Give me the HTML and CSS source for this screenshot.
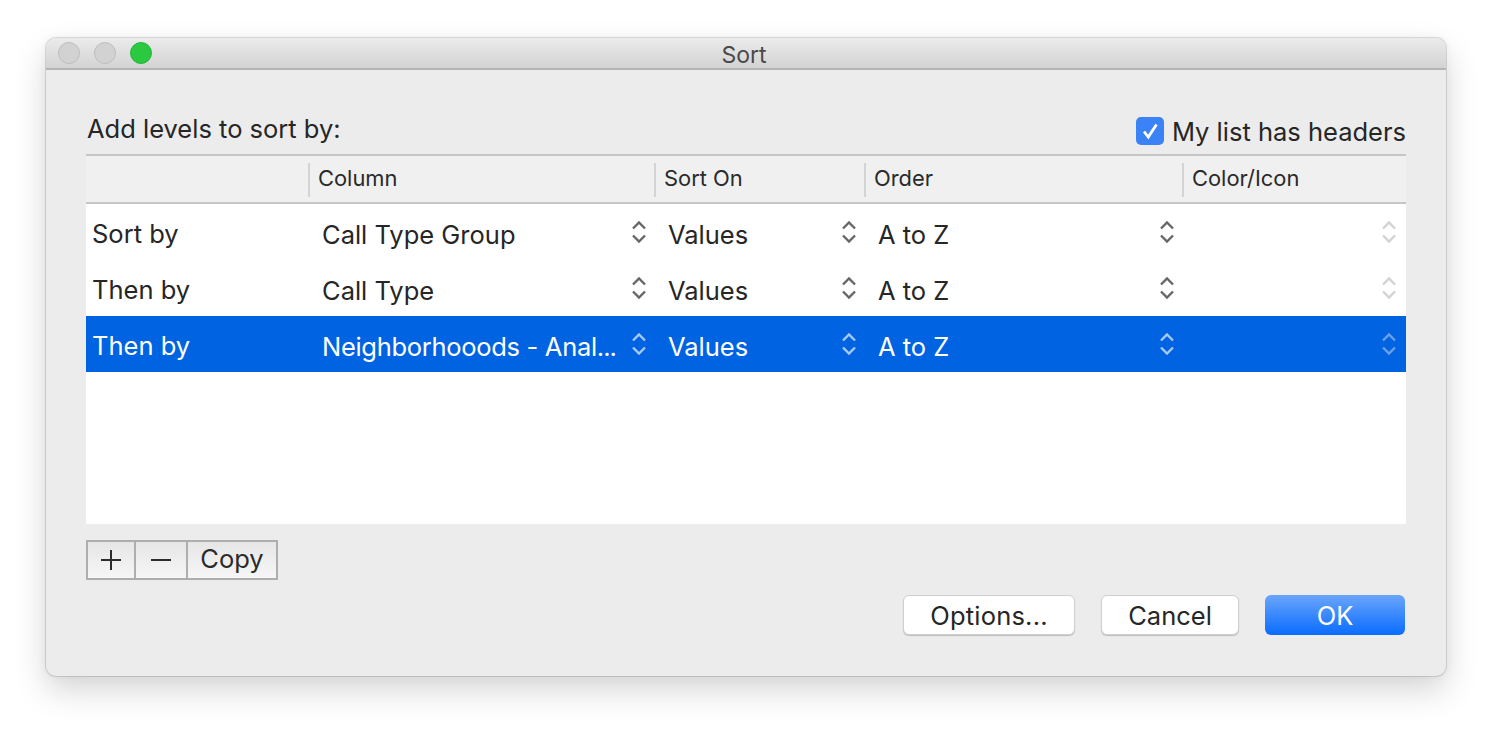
FILE: index.html
```html
<!DOCTYPE html>
<html lang="en">
<head>
<meta charset="utf-8">
<title>Sort</title>
<link rel="stylesheet" href="styles.css">
</head>
<body>
<svg class="defs" width="0" height="0" aria-hidden="true">
  <symbol id="updown" viewBox="0 0 16 26">
    <path d="M2 9.5 8 3.5 14 9.5M2 16.500 8 22.500 14 16.500" fill="none" stroke="currentColor" stroke-width="2.400"/>
  </symbol>
</svg>
<main class="window">
  <header class="titlebar">
    <div class="lights">
      <span class="light"></span>
      <span class="light"></span>
      <span class="light light-green"></span>
    </div>
    <div class="title">Sort</div>
  </header>
  <section class="content">
    <div class="top">
      <div class="prompt">Add levels to sort by:</div>
      <label class="headers-check">
        <span class="checkbox">
          <svg width="28" height="28" viewBox="0 0 28 28"><path d="M8 14.500 12.300 20 20.500 7.500" fill="none" stroke="#fff" stroke-width="2.800"/></svg>
        </span>
        <span>My list has headers</span>
      </label>
    </div>
    <div class="table">
      <div class="thead">
        <div class="th"></div>
        <div class="th th-sep">Column</div>
        <div class="th th-sep">Sort On</div>
        <div class="th th-sep">Order</div>
        <div class="th th-sep">Color/Icon</div>
      </div>
      <div class="tbody">
        <div class="row">
          <div class="cell label">Sort by</div>
          <div class="cell pick"><span class="val">Call Type Group</span><svg class="ud"><use href="#updown"/></svg></div>
          <div class="cell pick"><span class="val">Values</span><svg class="ud"><use href="#updown"/></svg></div>
          <div class="cell pick"><span class="val">A to Z</span><svg class="ud"><use href="#updown"/></svg></div>
          <div class="cell pick last"><span class="val"></span><svg class="ud off"><use href="#updown"/></svg></div>
        </div>
        <div class="row">
          <div class="cell label">Then by</div>
          <div class="cell pick"><span class="val">Call Type</span><svg class="ud"><use href="#updown"/></svg></div>
          <div class="cell pick"><span class="val">Values</span><svg class="ud"><use href="#updown"/></svg></div>
          <div class="cell pick"><span class="val">A to Z</span><svg class="ud"><use href="#updown"/></svg></div>
          <div class="cell pick last"><span class="val"></span><svg class="ud off"><use href="#updown"/></svg></div>
        </div>
        <div class="row selected">
          <div class="cell label">Then by</div>
          <div class="cell pick"><span class="val val-tight">Neighborhooods - Anal<span class="dots">...</span></span><svg class="ud"><use href="#updown"/></svg></div>
          <div class="cell pick"><span class="val">Values</span><svg class="ud"><use href="#updown"/></svg></div>
          <div class="cell pick"><span class="val">A to Z</span><svg class="ud"><use href="#updown"/></svg></div>
          <div class="cell pick last"><span class="val"></span><svg class="ud off"><use href="#updown"/></svg></div>
        </div>
      </div>
    </div>
    <div class="segments">
      <button class="seg seg-plus" type="button"><svg width="24" height="24" viewBox="0 0 24 24"><path d="M12 2V22M2 12H22" stroke="#2b2b2b" stroke-width="2"/></svg></button>
      <button class="seg seg-minus" type="button"><svg width="24" height="24" viewBox="0 0 24 24"><path d="M2 12H22" stroke="#2b2b2b" stroke-width="2"/></svg></button>
      <button class="seg seg-copy" type="button">Copy</button>
    </div>
    <div class="actions">
      <button class="btn btn-options" type="button">Options...</button>
      <button class="btn btn-cancel" type="button">Cancel</button>
      <button class="btn btn-ok" type="button">OK</button>
    </div>
  </section>
</main>
</body>
</html>
```
FILE: styles.css
```css
* { box-sizing: border-box; }
html, body { margin: 0; height: 100%; background: #fff; overflow: hidden; }
body {
  padding: 38px 46px 0;
  font-family: Inter, "Liberation Sans", sans-serif;
  color: #262626;
}
.defs { display: block; height: 0; }
.window {
  width: 1400px;
  height: 638px;
  background: #ececec;
  border-radius: 10px;
  overflow: hidden;
  box-shadow: 0 0 0 1px rgba(0,0,0,.12), 0 14px 32px rgba(0,0,0,.17), 0 0 10px rgba(0,0,0,.05);
}
.titlebar {
  height: 32px;
  display: flex;
  align-items: center;
  background: linear-gradient(#ebebeb, #d3d3d3);
  border-bottom: 2px solid #b4b4b4;
  position: relative;
}
.lights { display: flex; gap: 14px; padding-left: 12px; }
.light {
  width: 22px; height: 22px; border-radius: 50%;
  background: #d2d2d2; border: 1px solid #bdbdbd;
}
.light-green { background: #2ac940; border-color: #25b33a; }
.title {
  position: absolute; left: 0; right: 4px; top: 3px;
  text-align: center;
  font-size: 23px; line-height: 28px; color: #4a4a4a;
}
.content { padding: 0 40px; }
.top {
  height: 84px;
  display: flex;
  justify-content: space-between;
  align-items: flex-end;
}
.prompt { font-size: 25.500px; line-height: 30px; padding: 0 0 10px 1px; }
.headers-check {
  display: flex; align-items: center; gap: 8px;
  font-size: 25.500px; line-height: 30px; padding-bottom: 7px;
}
.checkbox {
  width: 28px; height: 28px; border-radius: 5px;
  background: #3b82f6; display: block; margin-top: -2px;
}
.checkbox svg { display: block; }
.table { border-top: 2px solid #c6c6c6; }
.thead {
  display: grid;
  grid-template-columns: 222px 346px 210px 318px 224px;
  height: 48px;
  background: #f0f0f0;
  border-bottom: 2px solid #c6c6c6;
  align-items: center;
}
.th {
  font-size: 21.900px; line-height: 30px; height: 34px;
  padding-left: 9px; margin-top: 1px; color: #2a2a2a;
}
.th-sep { border-left: 2px solid #d4d4d4; padding-left: 8px; }
.tbody { height: 320px; background: #fff; }
.row {
  display: grid;
  grid-template-columns: 222px 346px 210px 318px 224px;
  height: 56px;
}
.cell { font-size: 25.500px; line-height: 56px; white-space: nowrap; }
.label { padding-left: 6px; padding-top: 3px; line-height: 53px; }
.pick { display: flex; align-items: center; padding-left: 14px; padding-right: 7px; }
.val { flex: 1; min-width: 0; overflow: hidden; line-height: 56px; padding-top: 3px; }
.val-tight { letter-spacing: -.3px; }
.dots { letter-spacing: -1px; }
.ud { width: 16px; height: 26px; color: #666; margin-top: -3px; flex: none; }
.ud.off { color: #d2d2d2; }
.last { padding-right: 9px; }
.selected { background: #0063e1; color: #fff; }
.selected .ud { color: #a5c8f5; }
.selected .ud.off { color: #6aa0ec; }
.segments {
  display: flex;
  width: 192px;
  height: 40px;
  margin-top: 16px;
  border: 2px solid #aeaeae;
  background: linear-gradient(#e6e6e6, #f6f6f6);
}
.seg {
  font: inherit; font-size: 25.500px; color: #2b2b2b; background: none;
  border: 0; padding: 0; height: 36px;
  display: flex; align-items: center; justify-content: center;
}
.seg-plus { width: 48px; border-right: 2px solid #aeaeae; }
.seg-minus { width: 52px; border-right: 2px solid #aeaeae; }
.seg-copy { flex: 1; padding-bottom: 3px; }
.actions {
  display: flex;
  justify-content: flex-end;
  gap: 26px;
  margin-top: 15px;
  padding-right: 1px;
}
.btn {
  font: inherit; font-size: 25.500px; line-height: 36px; height: 40px;
  padding: 2px 0 0; border-radius: 6px; color: #262626; background: #fff;
  border: 1px solid #cfcfcf; box-shadow: 0 1px 1px rgba(0,0,0,.2);
}
.btn-options { width: 172px; letter-spacing: .2px; }
.btn-cancel { width: 138px; }
.btn-ok {
  width: 140px; color: #fff; border: 0;
  background: linear-gradient(#6aa5fb, #0a6cff);
  box-shadow: none;
}
```
